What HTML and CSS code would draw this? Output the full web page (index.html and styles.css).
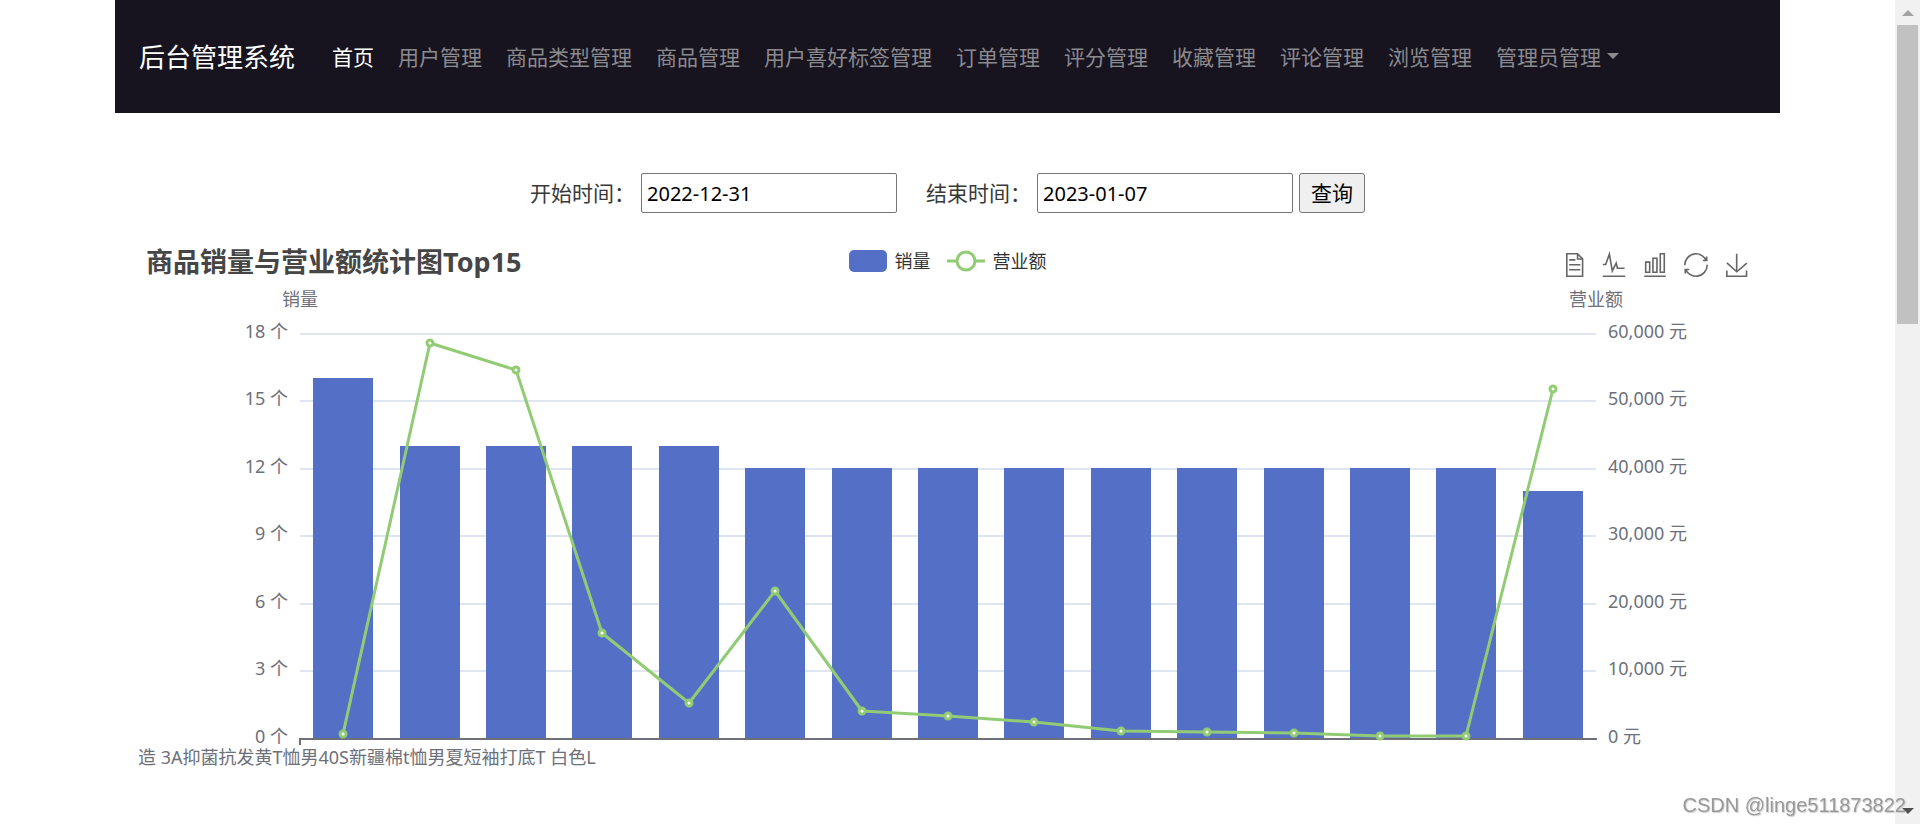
FILE: index.html
```html
<!DOCTYPE html>
<html lang="zh-CN">
<head>
<meta charset="utf-8">
<title>后台管理系统</title>
<link rel="stylesheet" href="styles.css">
</head>
<body>
<div class="page">
  <header class="navbar">
    <a class="brand" href="#">后台管理系统</a>
    <nav class="nav">
      <a class="nav-link active" href="#">首页</a>
      <a class="nav-link" href="#">用户管理</a>
      <a class="nav-link" href="#">商品类型管理</a>
      <a class="nav-link" href="#">商品管理</a>
      <a class="nav-link" href="#">用户喜好标签管理</a>
      <a class="nav-link" href="#">订单管理</a>
      <a class="nav-link" href="#">评分管理</a>
      <a class="nav-link" href="#">收藏管理</a>
      <a class="nav-link" href="#">评论管理</a>
      <a class="nav-link" href="#">浏览管理</a>
      <a class="nav-link dropdown" href="#">管理员管理</a>
    </nav>
  </header>
  <main class="content">
    <form class="filter">
      <label for="start">开始时间：</label>
      <input id="start" type="text" value="2022-12-31">
      <label class="second" for="end">结束时间：</label>
      <input id="end" type="text" value="2023-01-07">
      <button type="button">查询</button>
    </form>
    <section class="chart">
      <div class="chart-head">
        <h1>商品销量与营业额统计图Top15</h1>
        <div class="legend">
          <span class="legend-item"><span class="swatch"></span>销量</span>
          <span class="legend-item"><svg width="38" height="22" viewBox="0 0 38 22"><path d="M0 11H38" stroke="#91cc75" stroke-width="3"/><circle cx="19" cy="11" r="9" fill="#fff" stroke="#91cc75" stroke-width="3"/></svg>营业额</span>
        </div>
        <div class="toolbox">
          <button type="button" aria-label="数据视图"><svg viewBox="-3 0 60 60"><path d="M17.5,17.3H33 M45.4,29.5h-28 M11.5,2v56H51V14.8L38.4,2H11.5z M38.4,2.2v12.7H51 M45.4,41.7h-28"/></svg></button>
          <button type="button" aria-label="切换为折线图"><svg viewBox="0 0 60 60"><path d="M2,28.9h7.1l9.3-26l7.4,42l9.7-19.7l3,12.8h18M2,58h56"/></svg></button>
          <button type="button" aria-label="切换为柱状图"><svg viewBox="0 0 60 60"><path d="M6.7,22.9h10V48h-10V22.9z M24.9,13h10v35h-10V13z M43.2,2h10v46h-10V2z M3.1,58h53.7"/></svg></button>
          <button type="button" aria-label="还原"><svg viewBox="0 0 60 60"><path d="M47,18.9h9.8V8.7 M56.3,20.1 C52.1,9,40.5,0.6,26.8,2.1C12.6,3.7,1.6,16.2,2.1,30.6 M13,41.1H3.1v10.2 M3.7,39.9c4.2,11.1,15.8,19.5,29.5,18 c14.2-1.6,25.2-14.1,24.7-28.5"/></svg></button>
          <button type="button" aria-label="保存为图片"><svg viewBox="0 0 60 60"><path d="M4.7,24.9L29.3,47L54.7,25.4M4.6,43.6V58H53.8V43.6M29.2,46V2"/></svg></button>
        </div>
      </div>
      <svg class="plot" viewBox="0 0 1617 500" role="img" aria-label="商品销量与营业额统计图">
        <g class="grid">
          <path d="M161 49H1457M161 116H1457M161 184H1457M161 251H1457M161 319H1457M161 386H1457"/>
        </g>
        <g class="bars">
          <rect x="174" y="93" width="60" height="361"/>
          <rect x="261" y="161" width="60" height="293"/>
          <rect x="347" y="161" width="60" height="293"/>
          <rect x="433" y="161" width="60" height="293"/>
          <rect x="520" y="161" width="60" height="293"/>
          <rect x="606" y="183" width="60" height="271"/>
          <rect x="693" y="183" width="60" height="271"/>
          <rect x="779" y="183" width="60" height="271"/>
          <rect x="865" y="183" width="60" height="271"/>
          <rect x="952" y="183" width="60" height="271"/>
          <rect x="1038" y="183" width="60" height="271"/>
          <rect x="1125" y="183" width="60" height="271"/>
          <rect x="1211" y="183" width="60" height="271"/>
          <rect x="1297" y="183" width="60" height="271"/>
          <rect x="1384" y="206" width="60" height="248"/>
        </g>
        <path class="axis" d="M160 454H1458M161 454V460"/>
        <polyline class="line" points="204,449 291,58 377,85 463,348 550,418 636,306 723,426 809,431 895,437 982,446 1068,447 1155,448 1241,451 1327,451 1414,104"/>
        <g class="dots">
          <circle cx="204" cy="449" r="3"/><circle cx="291" cy="58" r="3"/><circle cx="377" cy="85" r="3"/><circle cx="463" cy="348" r="3"/><circle cx="550" cy="418" r="3"/><circle cx="636" cy="306" r="3"/><circle cx="723" cy="426" r="3"/><circle cx="809" cy="431" r="3"/><circle cx="895" cy="437" r="3"/><circle cx="982" cy="446" r="3"/><circle cx="1068" cy="447" r="3"/><circle cx="1155" cy="448" r="3"/><circle cx="1241" cy="451" r="3"/><circle cx="1327" cy="451" r="3"/><circle cx="1414" cy="104" r="3"/>
        </g>
        <g class="labels middle">
          <text x="161" y="21">销量</text>
          <text x="1457" y="21">营业额</text>
        </g>
        <g class="labels end">
          <text x="149" y="53">18 个</text>
          <text x="149" y="120">15 个</text>
          <text x="149" y="188">12 个</text>
          <text x="149" y="255">9 个</text>
          <text x="149" y="323">6 个</text>
          <text x="149" y="390">3 个</text>
          <text x="149" y="458">0 个</text>
        </g>
        <g class="labels">
          <text x="1469" y="53">60,000 元</text>
          <text x="1469" y="120">50,000 元</text>
          <text x="1469" y="188">40,000 元</text>
          <text x="1469" y="255">30,000 元</text>
          <text x="1469" y="323">20,000 元</text>
          <text x="1469" y="390">10,000 元</text>
          <text x="1469" y="458">0 元</text>
          <text x="-1" y="479">造 3A抑菌抗发黄T恤男40S新疆棉t恤男夏短袖打底T 白色L</text>
        </g>
      </svg>
    </section>
  </main>
</div>
<div class="scrollbar"><span class="arrow up"></span><span class="thumb"></span><span class="arrow down"></span></div>
<div class="watermark">CSDN @linge511873822</div>
</body>
</html>
```
FILE: styles.css
```css
* { box-sizing: border-box; }
body {
  margin: 0;
  padding-right: 25px;
  min-height: 100vh;
  background: #fff;
  color: #393939;
  font-family: "Noto Sans", "Noto Sans CJK SC", sans-serif;
  font-size: 21px;
  line-height: 32px;
}
.page { max-width: 1665px; margin: 0 auto; }
.navbar {
  display: flex;
  align-items: center;
  height: 113px;
  padding: 0 24px;
  background: #17141f;
}
.brand {
  margin-right: 25px;
  color: #fff;
  font-size: 26px;
  text-decoration: none;
  white-space: nowrap;
}
.nav { display: flex; }
.nav-link {
  padding: 0 12px;
  color: #8b8a8f;
  text-decoration: none;
  white-space: nowrap;
}
.nav-link.active { color: #fff; }
.dropdown::after {
  content: "";
  display: inline-block;
  margin-left: 6px;
  vertical-align: 6px;
  border: 6px solid transparent;
  border-top-color: currentColor;
  border-bottom: 0;
}
.content { padding: 60px 24px 0; }
.filter {
  display: flex;
  justify-content: center;
  align-items: center;
  gap: 6px;
}
.filter .second { margin-left: 23px; }
.filter input {
  width: 256px;
  height: 40px;
  padding: 0 5px;
  border: 1px solid #767676;
  border-radius: 2px;
  background: #fff;
  color: #000;
  font: 400 20px "Noto Sans", "Noto Sans CJK SC", sans-serif;
}
.filter button {
  height: 40px;
  padding: 0 11px;
  border: 1px solid #767676;
  border-radius: 3px;
  background: #efefef;
  color: #000;
  font: inherit;
}
.chart-head {
  display: grid;
  grid-template-columns: 1fr auto 1fr;
  align-items: center;
  height: 44px;
  margin-top: 28px;
  padding: 0 7px;
}
.chart-head h1 {
  margin: 0;
  padding-bottom: 2px;
  color: #464646;
  font-size: 27px;
  font-weight: 700;
  white-space: nowrap;
}
.legend {
  display: flex;
  gap: 16px;
  padding-bottom: 4px;
  font-size: 18px;
  line-height: 22px;
  color: #333;
}
.legend-item { display: flex; align-items: center; gap: 8px; }
.swatch { width: 38px; height: 22px; border-radius: 5px; background: #5470c6; }
.toolbox { display: flex; justify-content: flex-end; gap: 17px; padding-top: 4px; }
.toolbox button { display: flex; padding: 0; border: 0; background: none; }
.toolbox svg {
  width: 24px;
  height: 24px;
  overflow: visible;
  fill: none;
  stroke: #666;
  stroke-width: 4;
}
.plot { display: block; width: 100%; overflow: hidden; }
.grid path { stroke: #e0e6f1; stroke-width: 2; }
.bars rect { fill: #5470c6; }
.axis { fill: none; stroke: #6e7079; stroke-width: 2; }
.line { fill: none; stroke: #91cc75; stroke-width: 3; stroke-linejoin: bevel; }
.dots circle { fill: #fff; stroke: #91cc75; stroke-width: 3; }
.labels { fill: #6e7079; font-size: 18px; }
.middle { text-anchor: middle; }
.end { text-anchor: end; }
.scrollbar {
  position: fixed;
  top: 0;
  right: 0;
  bottom: 0;
  width: 25px;
  padding: 0 2px;
  background: #f1f1f1;
  display: flex;
  flex-direction: column;
  align-items: center;
}
.arrow { border: 6px solid transparent; }
.up { margin: 10px 0 9px; border-top: 0; border-bottom-color: #a3a3a3; }
.down { margin: auto 0 10px; border-bottom: 0; border-top-color: #505050; }
.thumb { width: 100%; height: 299px; background: #c1c1c1; }
.watermark {
  position: fixed;
  right: 14px;
  bottom: 4px;
  color: #999;
  font-family: "Liberation Sans", sans-serif;
  font-size: 20px;
  line-height: 30px;
  text-shadow: 1px 1px 1px #ccc;
}
```
